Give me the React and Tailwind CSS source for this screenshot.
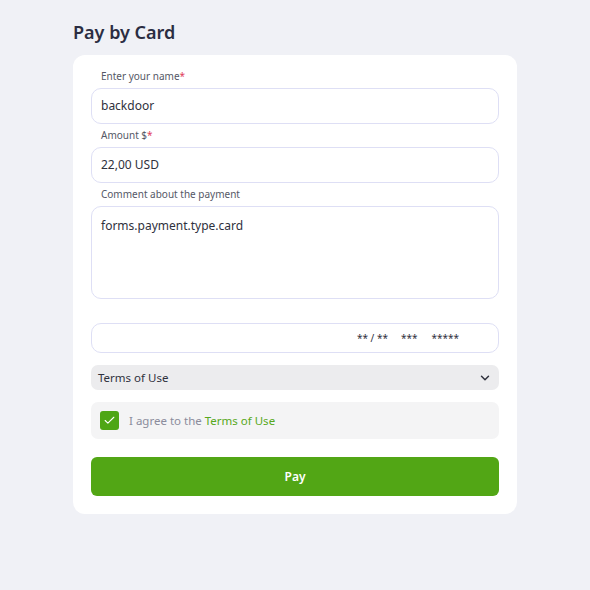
import { ChevronDown, Check } from 'lucide-react';

function Label({ children }) {
  return (
    <label className="block text-[10px] text-[#555866] pl-[10px] mb-[5px] leading-[13px]">
      {children}
    </label>
  );
}

function Field({ label, required, value }) {
  return (
    <div>
      <Label>
        {label}
        {required && <span className="text-[#e0405a]">*</span>}
      </Label>
      <div className="h-[36px] rounded-[10px] border border-[#dedff5] px-[9px] flex items-center text-[12px] text-[#2f313d]">
        {value}
      </div>
    </div>
  );
}

export default function App() {
  return (
    <div className="min-h-[590px] bg-[#f0f1f6] font-['Noto_Sans',sans-serif] pt-[19px]">
      <div className="w-[444px] ml-[73px]">
        <h1 className="text-[18px] font-semibold text-[#2b2d42] leading-[26px] mb-[10px]">Pay by Card</h1>

        <div className="bg-white rounded-[12px] px-[18px] pt-[15px] pb-[18px]">
          <div className="space-y-[5px]">
            <Field label="Enter your name" required value="backdoor" />
            <Field label="Amount $" required value="22,00 USD" />

            <div>
              <Label>Comment about the payment</Label>
              <div className="h-[93px] rounded-[10px] border border-[#dedff5] px-[9px] pt-[10px] text-[12px] text-[#2f313d]">
                forms.payment.type.card
              </div>
            </div>
          </div>

          <div className="mt-[24px] h-[30px] rounded-[10px] border border-[#dedff5] flex items-center justify-end pr-[39px] text-[10px] text-[#2f313d]">
            <span>** / **</span>
            <span className="ml-[13px]">***</span>
            <span className="ml-[14px]">*****</span>
          </div>

          <div className="mt-[12px] h-[25px] rounded-[7px] bg-[#ececee] flex items-center justify-between px-[7px] text-[11.5px] text-[#2f313d]">
            <span>Terms of Use</span>
            <ChevronDown className="w-[14px] h-[14px]" strokeWidth={2.5} />
          </div>

          <div className="mt-[12px] h-[37px] rounded-[7px] bg-[#f4f4f5] flex items-center px-[9px] gap-[10px] text-[11.5px]">
            <div className="w-[19px] h-[19px] rounded-[3px] bg-[#4ea615] flex items-center justify-center">
              <Check className="w-[13px] h-[13px] text-white" strokeWidth={2} />
            </div>
            <span className="text-[#8b8c9c]">
              I agree to the <span className="text-[#57a820]">Terms of Use</span>
            </span>
          </div>

          <button className="mt-[18px] w-full h-[39px] rounded-[6px] bg-[#52a615] text-white text-[12px] font-semibold">
            Pay
          </button>
        </div>
      </div>
    </div>
  );
}
